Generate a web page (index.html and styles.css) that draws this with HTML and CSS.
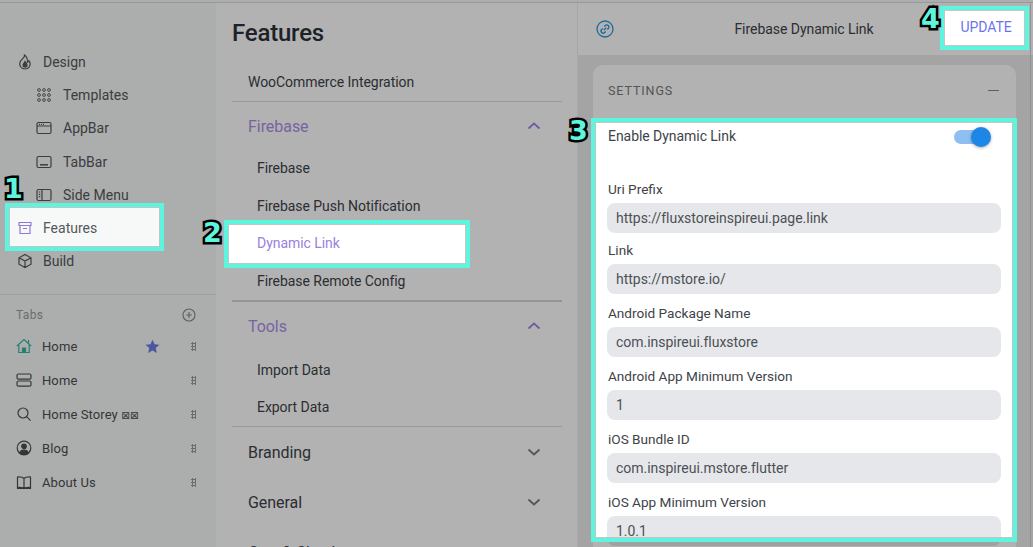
FILE: index.html
```html
<!DOCTYPE html>
<html lang="en">
<head>
<meta charset="utf-8">
<title>Firebase Dynamic Link</title>
<link rel="stylesheet" href="styles.css">
</head>
<body>
<div class="app">
  <aside class="side">
    <nav class="nav">
      <a class="nav-item"><svg class="ic" viewBox="0 0 16 16"><path d="M7.500 1C8 3 6 4 4.200 6.200 2.400 8.500 2.400 11 3.800 13c1 1.300 2.600 2 4.200 2s3.300-.7 4.300-2.200c1.200-2 .9-4.300-.3-6-.4.9-1 1.300-1.500 1.500C10.600 5.300 9.800 2.500 7.500 1z"/><path d="M8 7.500c.9 1.300 2 2.300 2 3.600a2 2 0 0 1-4 0c0-1.300 1.500-2.200 2-3.600z" fill="currentColor"/></svg>Design</a>
      <a class="nav-item sub"><svg class="ic" viewBox="0 0 16 16"><g class="dots"><circle cx="3" cy="3" r="1.400"/><circle cx="8" cy="3" r="1.400"/><circle cx="13" cy="3" r="1.400"/><circle cx="3" cy="8" r="1.400"/><circle cx="8" cy="8" r="1.400"/><circle cx="13" cy="8" r="1.400"/><circle cx="3" cy="13" r="1.400"/><circle cx="8" cy="13" r="1.400"/><circle cx="13" cy="13" r="1.400"/></g></svg>Templates</a>
      <a class="nav-item sub"><svg class="ic" viewBox="0 0 16 16"><rect x="1" y="2.500" width="14" height="11" rx="1.500"/><path d="M1 6h14M3 4.300h1M5 4.300h1M7 4.300h1"/></svg>AppBar</a>
      <a class="nav-item sub"><svg class="ic" viewBox="0 0 16 16"><rect x="1" y="2.500" width="14" height="11" rx="1.500"/><path d="M4 10.800h8" stroke-width="1.500"/></svg>TabBar</a>
      <a class="nav-item sub"><svg class="ic" viewBox="0 0 16 16"><rect x="1" y="2.500" width="14" height="11" rx="1.500"/><path d="M6 2.500v11M2.800 5h1.500M2.800 7.300h1.500M2.800 9.600h1.500"/></svg>Side Menu</a>
      <a class="nav-item"><svg class="ic ic-violet" viewBox="0 0 16 16"><path d="M2 2.500h12v3H2zM3 5.500v8h10v-8M6 8.500h4"/></svg>Features</a>
      <a class="nav-item"><svg class="ic" viewBox="0 0 16 16"><path d="M8 1.500l6 3.300v6.400l-6 3.300-6-3.300V4.800zM2 4.800l6 3.300 6-3.300M8 8.100v6.400"/></svg>Build</a>
    </nav>
    <section class="tabs">
      <div class="tabs-head"><span>Tabs</span><svg class="ic ic-plus" viewBox="0 0 14 14"><circle cx="7" cy="7" r="6"/><path d="M7 4v6M4 7h6"/></svg></div>
      <div class="tab"><svg class="ic ic-teal" viewBox="0 0 16 16"><path d="M.8 8L8 1.500 15.200 8M2.800 6.500V14.500h10.400V6.500M12.500 2v3.500"/><path d="M6.500 10h3v4.500h-3z" fill="currentColor"/></svg><span class="tab-name">Home</span><svg class="star" viewBox="0 0 16 16"><path d="M8 .8l2.200 4.800 5.200.6-3.900 3.500 1.100 5.200L8 12.300l-4.600 2.600 1.100-5.200L.6 6.200l5.200-.6z"/></svg><i class="grip"></i></div>
      <div class="tab"><svg class="ic" viewBox="0 0 16 16"><rect x="1" y="2" width="14" height="5.200" rx="1.500"/><rect x="1" y="9" width="14" height="5.200" rx="1.500"/></svg><span class="tab-name">Home</span><i class="grip"></i></div>
      <div class="tab"><svg class="ic" viewBox="0 0 16 16"><circle cx="7" cy="7" r="5"/><path d="M10.600 10.600l4 4"/></svg><span class="tab-name">Home Storey <span class="tofu">⊠⊠</span></span><i class="grip"></i></div>
      <div class="tab"><svg class="ic" viewBox="0 0 16 16"><circle cx="8" cy="8" r="6.800"/><circle cx="8" cy="6.300" r="2.300" fill="currentColor"/><path d="M3.500 13c.8-2.200 2.500-3 4.500-3s3.700.8 4.500 3c-2.500 2-6.500 2-9 0z" fill="currentColor"/></svg><span class="tab-name">Blog</span><i class="grip"></i></div>
      <div class="tab"><svg class="ic" viewBox="0 0 16 16"><path d="M8 4.500C6.500 3 4 2.800 1.500 3v10.500c2.500-.2 5 0 6.500 1 1.500-1 4-1.200 6.500-1V3C12 2.800 9.500 3 8 4.500zM8 4.500v10M1.500 13.500v1h13v-1"/></svg><span class="tab-name">About Us</span><i class="grip"></i></div>
    </section>
  </aside>

  <main class="mid">
    <h1 class="mid-title">Features</h1>
    <a class="mid-link">WooCommerce Integration</a>
    <hr class="rule">
    <div class="group-head open tight">Firebase<svg class="chev" viewBox="0 0 14 8"><path d="M1.500 6.500L7 1.500l5.500 5"/></svg></div>
    <a class="leaf">Firebase</a>
    <a class="leaf">Firebase Push Notification</a>
    <a class="leaf active">Dynamic Link</a>
    <a class="leaf">Firebase Remote Config</a>
    <hr class="rule thick">
    <div class="group-head open roomy">Tools<svg class="chev" viewBox="0 0 14 8"><path d="M1.500 6.500L7 1.500l5.500 5"/></svg></div>
    <a class="leaf">Import Data</a>
    <a class="leaf">Export Data</a>
    <hr class="rule">
    <div class="group-head tall">Branding<svg class="chev" viewBox="0 0 14 8"><path d="M1.500 1.500L7 6.500l5.500-5"/></svg></div>
    <div class="group-head tall">General<svg class="chev" viewBox="0 0 14 8"><path d="M1.500 1.500L7 6.500l5.500-5"/></svg></div>
    <div class="group-head tall">Cart &amp; Checkout<svg class="chev" viewBox="0 0 14 8"><path d="M1.500 1.500L7 6.500l5.500-5"/></svg></div>
  </main>

  <section class="detail">
    <header class="detail-head">
      <svg class="link-ic" viewBox="0 0 18 18"><circle cx="9" cy="9" r="8"/><path d="M7.800 10.200l2.400-2.400M8.300 6.500l1-1a2.100 2.100 0 0 1 3 3l-1 1M9.700 11.500l-1 1a2.100 2.100 0 0 1-3-3l1-1"/></svg>
      <span class="detail-title">Firebase Dynamic Link</span>
      <button class="update">UPDATE</button>
    </header>
    <div class="card">
      <div class="card-head"><span>SETTINGS</span><i class="minus"></i></div>
      <div class="toggle-row"><span>Enable Dynamic Link</span><span class="switch"><i class="knob"></i></span></div>
      <label class="field first">Uri Prefix<span class="input">https://fluxstoreinspireui.page.link</span></label>
      <label class="field">Link<span class="input">https://mstore.io/</span></label>
      <label class="field">Android Package Name<span class="input">com.inspireui.fluxstore</span></label>
      <label class="field">Android App Minimum Version<span class="input">1</span></label>
      <label class="field">iOS Bundle ID<span class="input">com.inspireui.mstore.flutter</span></label>
      <label class="field">iOS App Minimum Version<span class="input">1.0.1</span></label>
    </div>
  </section>

  <div class="dim"></div>
  <div class="frame f1"></div>
  <div class="frame f2"></div>
  <div class="frame f3"></div>
  <div class="frame f4"></div>
  <b class="badge b1">1</b>
  <b class="badge b2">2</b>
  <b class="badge b3">3</b>
  <b class="badge b4">4</b>
</div>
</body>
</html>
```
FILE: styles.css
```css
* { box-sizing: border-box; }
html, body { margin: 0; height: 100%; overflow: hidden; }
body { font-family: Roboto, "Liberation Sans", sans-serif; color: #3a3f45; font-size: 14px; }
a { display: flex; align-items: center; }
svg { display: block; flex: none; fill: none; stroke: currentColor; }

.app { position: relative; display: flex; width: 1033px; height: 547px; overflow: hidden; padding-top: 3px; background: #f7f9f8 linear-gradient(#dcdcdc, #dcdcdc) 0 2px / 100% 1px no-repeat; }

/* Left rail */
.side { width: 216px; flex: none; background: #f7f9f8; padding-top: 42px; }
.nav { display: flex; flex-direction: column; padding-bottom: 16px; border-bottom: 1px solid #e4e6e6; }
.nav-item { height: 33.3px; padding-left: 17px; gap: 10px; color: #55585a; }
.nav-item.sub { padding-left: 36px; gap: 11px; }
.ic { width: 16px; height: 16px; stroke-width: 1.2; }
.dots circle { fill: none; stroke-width: .9; }
.ic-violet { color: #9276d8; }
.ic-teal { color: #3cb4a8; }
.tabs { padding: 11px 20px 0 16px; }
.tabs-head { display: flex; justify-content: space-between; align-items: center; height: 18px; font-size: 12px; color: #9a9c9d; margin-bottom: 5px; letter-spacing: .3px; }
.ic-plus { width: 14px; height: 14px; color: #8c8e90; }
.tab { display: flex; align-items: center; height: 34px; font-size: 13px; color: #4b4e51; gap: 10px; }
.tab-name { flex: 1; letter-spacing: .1px; }
.tofu { font-family: "DejaVu Sans", sans-serif; font-size: 10.500px; letter-spacing: 0; }
.star { width: 15px; height: 15px; fill: #6d7de8; stroke: none; margin-right: 21px; }
.grip { width: 5px; height: 9px; flex: none; background: radial-gradient(circle, #9a9c9d 0 1px, transparent 1.2px) 0 0 / 3px 3px; }

/* Feature list */
.mid { width: 362px; flex: none; padding: 0 15px; border-left: 1px solid #fff; border-right: 1px solid #f0f0f0; background: #fff; letter-spacing: -.05px; }
.mid-title { margin: 0; height: 60px; display: flex; align-items: center; font-size: 24px; font-weight: 500; color: #2a3138; letter-spacing: -.2px; }
.mid-link { height: 38px; padding-left: 16px; color: #3e4349; }
.rule { margin: 0; border: 0; height: 1px; background: #ddd; }
.rule.thick { height: 2px; background: #d4d4d4; }
.group-head { display: flex; align-items: center; justify-content: space-between; height: 48px; padding: 0 21px 0 16px; font-size: 16px; color: #3e4349; }
.group-head.tight { margin-bottom: -1px; }
.group-head.roomy { height: 49px; }
.group-head.tall { height: 50px; }
.group-head.open { color: #ab8fe8; }
.chev { width: 14px; height: 8px; stroke-width: 1.7; color: #77797d; }
.open .chev { color: #a283e6; }
.leaf { height: 37.7px; padding-left: 25px; color: #3e4349; }
.leaf.active { color: #9b80dc; }

/* Detail */
.detail { position: relative; flex: 1; min-width: 0; background: #ebebeb; }
.detail::after { content: ""; position: absolute; top: 0; bottom: 0; right: 2px; width: 1px; background: #d2d2d2; }
.detail-head { position: relative; display: flex; align-items: center; justify-content: center; height: 52px; background: #fff; padding: 0 16px; }
.link-ic { position: absolute; left: 18px; top: 17px; width: 18px; height: 18px; color: #2f97d8; stroke-width: 1.3; }
.detail-title { color: #3e4349; padding-right: 3px; letter-spacing: -.05px; }
.update { position: absolute; right: 14px; top: 6px; height: 36px; width: 66px; padding: 0; border: 0; background: none; font: inherit; color: #6c74ec; letter-spacing: -.05px; }
.card { margin: 10px 0 0 15px; width: 423px; background: #fff; border-radius: 10px; padding: 0 15px; }
.card-head { display: flex; align-items: center; justify-content: space-between; height: 50px; font-size: 12.500px; letter-spacing: .9px; color: #77797d; padding-right: 2px; }
.minus { width: 11px; height: 1px; background: #888; }
.toggle-row { display: flex; justify-content: space-between; height: 64.500px; padding-top: 12px; line-height: 18px; color: #3e4349; letter-spacing: -.05px; }
.switch { position: relative; width: 31px; height: 14px; margin: 3px 16px 0 0; border-radius: 7px; background: #8ebff0; }
.knob { position: absolute; right: -6px; top: -3px; width: 20px; height: 20px; border-radius: 50%; background: #1e86e6; box-shadow: 0 1px 3px rgba(0,0,0,.35); }
.field { display: block; height: 63px; line-height: 18px; color: #3e4349; font-size: 13.600px; }
.field.first { height: 61.500px; }
.input { display: block; height: 30px; margin: 5px 0 0 -1px; width: 394px; padding: 0 9px; border-radius: 8px; background: #e6e7ea; line-height: 30px; color: #4c5055; font-size: 14px; letter-spacing: -.02px; }

/* Tutorial overlay */
.dim { position: absolute; inset: 0; background: rgba(0,0,0,.3);
  clip-path: path(evenodd, "M0 0H1033V547H0Z M9 207H160V247H9Z M228 224H466V264H228Z M595 122H1013V538H595Z M944 10H1025V46H944Z"); }
.frame { position: absolute; border: 4px solid #5ef5df; box-shadow: inset 0 0 0 1px #c4c4c4; }
.f1 { left: 5px; top: 203px; width: 159px; height: 48px; }
.f2 { left: 224px; top: 220px; width: 246px; height: 48px; }
.f3 { left: 591px; top: 118px; width: 426px; height: 424px; }
.f4 { left: 940px; top: 6px; width: 89px; height: 44px; }
.badge { position: absolute; font: 700 27px/1 "DejaVu Sans", sans-serif; color: #5ef5df; -webkit-text-stroke: 5px #000; paint-order: stroke fill; }
.b1 { left: 4px; top: 175px; }
.b2 { left: 203px; top: 219px; }
.b3 { left: 569px; top: 117px; }
.b4 { left: 921px; top: 5px; }
```
